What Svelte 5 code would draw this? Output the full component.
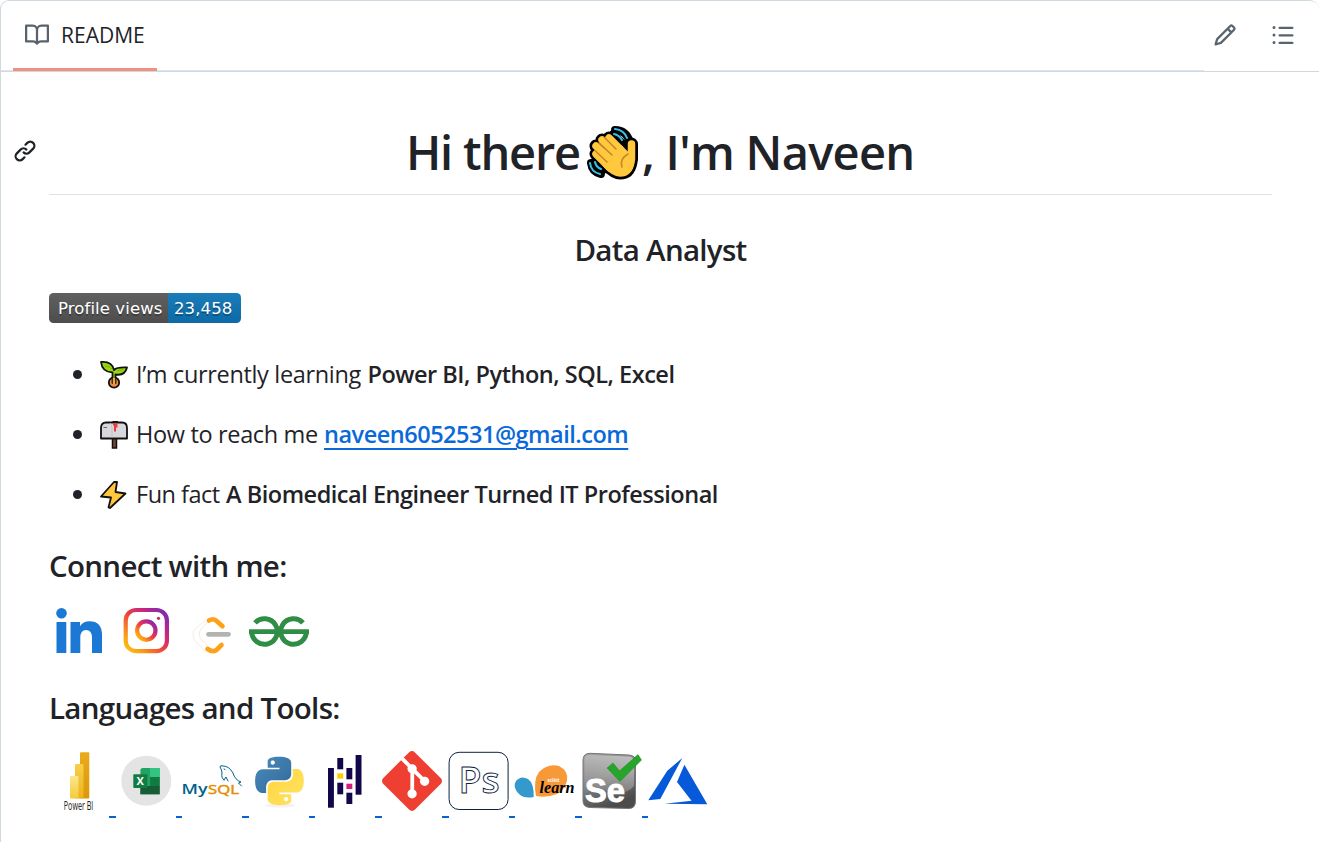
<script>
  const ink = '#13064b';
  const pandas = [
    [13, 17, 39.7, ink], [22.3, 7, 11.3, ink], [22.3, 22.3, 5.4, '#fc0'], [22.3, 31.7, 11.6, ink],
    [31.4, 17, 11.3, ink], [31.4, 32.7, 5.3, '#d81b7e'], [31.4, 41.7, 11.3, ink], [40.6, 4, 39.7, ink]
  ];
</script>

<div class="box">
  <header>
    <nav>
      <span class="tab">
        <svg class="oct" viewBox="0 0 16 16"><path d="M0 1.75A.75.75 0 0 1 .75 1h4.253c1.227 0 2.317.59 3 1.501A3.743 3.743 0 0 1 11.006 1h4.245a.75.75 0 0 1 .75.75v10.5a.75.75 0 0 1-.75.75h-4.507a2.25 2.25 0 0 0-1.591.659l-.622.621a.75.75 0 0 1-1.06 0l-.622-.621A2.25 2.25 0 0 0 5.258 13H.75a.75.75 0 0 1-.75-.75Zm7.251 10.324.004-5.073-.002-2.253A2.25 2.25 0 0 0 5.003 2.5H1.5v9h3.757a3.75 3.75 0 0 1 1.994.574ZM8.755 4.75l-.004 7.322a3.752 3.752 0 0 1 1.992-.572H14.5v-9h-3.495a2.25 2.25 0 0 0-2.25 2.25Z"/></svg>
        <span class="label">README</span>
      </span>
    </nav>
    <div class="actions">
      <svg class="oct" viewBox="0 0 16 16"><path d="M11.013 1.427a1.75 1.75 0 0 1 2.474 0l1.086 1.086a1.75 1.75 0 0 1 0 2.474l-8.61 8.61c-.21.21-.47.364-.756.445l-3.251.93a.75.75 0 0 1-.927-.928l.929-3.25c.081-.286.235-.547.445-.758l8.61-8.61Zm.176 4.823L9.75 4.81l-6.286 6.287a.253.253 0 0 0-.064.108l-.558 1.953 1.953-.558a.253.253 0 0 0 .108-.064Zm1.238-3.763a.25.25 0 0 0-.354 0L10.811 3.75l1.439 1.44 1.263-1.263a.25.25 0 0 0 0-.354Z"/></svg>
      <svg class="oct" viewBox="0 0 16 16"><path d="M5.75 2.5h8.5a.75.75 0 0 1 0 1.5h-8.5a.75.75 0 0 1 0-1.5Zm0 5h8.5a.75.75 0 0 1 0 1.5h-8.5a.75.75 0 0 1 0-1.5Zm0 5h8.5a.75.75 0 0 1 0 1.5h-8.5a.75.75 0 0 1 0-1.5ZM2 14a1 1 0 1 1 0-2 1 1 0 0 1 0 2Zm1-6a1 1 0 1 1-2 0 1 1 0 0 1 2 0ZM2 4a1 1 0 1 1 0-2 1 1 0 0 1 0 2Z"/></svg>
    </div>
  </header>

  <main>
    <div class="title">
      <svg class="anchor" viewBox="0 0 16 16"><path d="m7.775 3.275 1.25-1.25a3.5 3.5 0 1 1 4.95 4.95l-2.5 2.5a3.5 3.5 0 0 1-4.95 0 .751.751 0 0 1 .018-1.042.751.751 0 0 1 1.042-.018 1.998 1.998 0 0 0 2.83 0l2.5-2.5a2.002 2.002 0 0 0-2.83-2.83l-1.25 1.25a.751.751 0 0 1-1.042-.018.751.751 0 0 1-.018-1.042Zm-4.69 9.64a1.998 1.998 0 0 0 2.83 0l1.25-1.25a.751.751 0 0 1 1.042.018.751.751 0 0 1 .018 1.042l-1.25 1.25a3.5 3.5 0 1 1-4.95-4.95l2.5-2.5a3.5 3.5 0 0 1 4.95 0 .751.751 0 0 1-.018 1.042.751.751 0 0 1-1.042.018 1.998 1.998 0 0 0-2.83 0l-2.5 2.5a1.998 1.998 0 0 0 0 2.83Z"/></svg>
      <h1>
        <span>Hi there</span>
        <svg class="wave" viewBox="0 0 54 56">
          <g fill="none" stroke-linecap="round">
            <g stroke="#000" stroke-width="8">
              <path d="M29 5Q40 5 44 17M27 9L38 20M5 38Q6 47 15 49M10 36L17 45"/>
            </g>
            <g stroke="#000" stroke-width="13" stroke-linejoin="round">
              <path d="M23 13L34 24M16 15L30 29M10 21L25 35M10 29L24 43M45.5 19V34"/>
              <path fill="#000" d="M22 25L34 24L41 31L45 29V37Q43 48 34 48Q28 48 20 39Z"/>
            </g>
            <g stroke="#ffc83d" stroke-width="7.5" stroke-linejoin="round">
              <path d="M23 13L34 24M16 15L30 29M10 21L25 35M10 29L24 43M45.5 19V34"/>
              <path fill="#ffc83d" d="M22 25L34 24L41 31L45 29V37Q43 48 34 48Q28 48 20 39Z"/>
            </g>
            <path stroke="#c4862b" stroke-width="1.6" d="M18.5 12.5L30 24M13 18L26 30M9.5 26L21 37M42 29Q33 34 36 42"/>
            <path stroke="#35c1e8" stroke-width="2.1" d="M29 4Q38 5 41 13M28 9Q33 10 36 15M4 38Q5 47 14 49M9 37Q10 42 15 44"/>
          </g>
        </svg>
        <span class="rest">, I'm Naveen</span>
      </h1>
    </div>

    <h3 class="role">Data Analyst</h3>

    <div class="badge"><span class="views">Profile views</span><span class="count">23,458</span></div>

    <ul>
      <li>
        <svg viewBox="0 0 28 28">
          <g stroke="#111" stroke-width="1.8" stroke-linejoin="round">
            <circle cx="14" cy="21.5" r="5.2" fill="#ef8a4c"/>
            <path fill="#9bd512" d="M1 1Q12 0 14 9Q17 6 27 6.500Q25 15 15.500 13.500V22H12.500V11.500Q2 11 1 1Z"/>
            <path fill="none" stroke="#5fa30c" stroke-width=".7" d="M5 5Q9 5 12 8M17 10Q19 9 23 9"/>
            <path stroke="#f6a623" stroke-width="2.400" d="M14 17V23"/>
          </g>
        </svg>
        <span class="t1">I’m currently learning</span><b class="b1">Power BI, Python, SQL, Excel</b>
      </li>
      <li>
        <svg viewBox="0 0 28 28">
          <rect x="12.500" y="15" width="4" height="12" fill="#764635" stroke="#111" stroke-width="1.500"/>
          <path fill="#d8d8dc" stroke="#111" stroke-width="1.800" stroke-linejoin="round" d="M1 17.500V7Q1 1.500 6 1.500H22Q27 1.500 27 7V17.500Z"/>
          <path d="M10 2Q12 4 12 7V16.500" fill="none" stroke="#c0c0c6"/>
          <path d="M3.500 6.500H7" stroke="#666"/>
          <path d="M12.500 1H18" stroke="#111" stroke-width="2"/>
          <path fill="#f03a3a" d="M13 2.500H17.500V6.500H16V10.500H14V4.500H13Z"/>
        </svg>
        <span class="t2">How to reach me</span><a class="b2" href="mailto:naveen6052531@gmail.com">naveen6052531@gmail.com</a>
      </li>
      <li>
        <svg viewBox="0 0 28 28">
          <path fill="#ffc83d" stroke="#111" stroke-width="1.800" stroke-linejoin="round" d="M14 1L1 15.500L11 16.500L8.500 26.500L10 27L25.500 12.500L15.500 11L17 1Z"/>
        </svg>
        <span class="t3">Fun fact</span><b class="b3">A Biomedical Engineer Turned IT Professional</b>
      </li>
    </ul>

    <h3 class="connect">Connect with me:</h3>
    <div class="icons social">
      <svg viewBox="0 0 60 46">
        <g fill="#1b78d4"><circle cx="12.500" cy="5.300" r="5.300"/><path d="M7.500 14H17.300V45H7.500ZM21.500 14H31v4.200Q34 13.200 40.500 13.200Q53 13.200 53 27V45H43V30Q43 22 37 22Q31.300 22 31.300 30V45H21.500Z"/></g>
      </svg>
      <svg viewBox="0 0 60 46">
        <defs>
          <linearGradient id="ig" x1="0" y1="1" x2="1" y2="0"><stop stop-color="#fdc70c"/><stop offset=".2" stop-color="#fb9a18"/><stop offset=".48" stop-color="#ed403f"/><stop offset=".7" stop-color="#c9277f"/><stop offset="1" stop-color="#722abb"/></linearGradient>
        </defs>
        <rect x="9.700" y="2" width="41.200" height="41.200" rx="10.500" fill="none" stroke="url(#ig)" stroke-width="4.200"/>
        <circle cx="30.300" cy="22.600" r="9.200" fill="none" stroke="url(#ig)" stroke-width="4.200"/>
        <circle cx="42.500" cy="10.300" r="1.600" fill="#c32a6b"/>
      </svg>
      <svg viewBox="0 0 60 46">
        <g fill="none" stroke-linecap="round">
          <path stroke="#f6e3d8" stroke-width=".8" d="M25 11L13 21Q9 27 13 33L23 43M27 13L19 21Q15 27 20 32L28 40"/>
          <path stroke="#ffa116" stroke-width="4.600" stroke-linejoin="round" d="M27 12.500Q31 10 34 12.500L40.500 18.300M25.500 41Q31.500 45 35 41.500L39.500 37"/>
          <path stroke="#b3b3b3" stroke-width="4.800" d="M26.500 26.300H46.500"/>
        </g>
      </svg>
      <svg viewBox="0 0 60 46">
        <g fill="none" stroke="#2f8d46" stroke-width="5">
          <path d="M6 14.900A12.800 12.800 0 1 1 2.700 23.500M54 14.900A12.800 12.800 0 1 0 57.300 23.500"/>
          <path stroke-width="4.800" d="M0 23.600H60"/>
        </g>
      </svg>
    </div>

    <h3 class="langs">Languages and Tools:</h3>
    <div class="icons tools">
      <svg viewBox="0 0 60 60">
        <defs>
          <linearGradient id="p1" x2="0" y2="1"><stop stop-color="#e9ab1c"/><stop offset="1" stop-color="#dd960a"/></linearGradient>
          <linearGradient id="p2" x2="0" y2="1"><stop stop-color="#f6cf48"/><stop offset="1" stop-color="#eeb21a"/></linearGradient>
          <linearGradient id="p3" x2="0" y2="1"><stop stop-color="#fbe68c"/><stop offset="1" stop-color="#f3cb3e"/></linearGradient>
        </defs>
        <rect x="31" y="1.200" width="9.300" height="46.300" rx="1" fill="url(#p1)"/>
        <rect x="26" y="13" width="8.500" height="34.500" rx="1" fill="url(#p2)"/>
        <rect x="21" y="25" width="8.500" height="22.500" rx="1" fill="url(#p3)"/>
        <text class="sans" x="14.800" y="58.500" font-size="12.500" fill="#222" textLength="29.500" lengthAdjust="spacingAndGlyphs">Power BI</text>
      </svg><i></i>
      <svg viewBox="0 0 60 60">
        <circle cx="30.300" cy="29.700" r="25" fill="#e4e4e4"/>
        <path fill="#21a366" d="M26 17H43.700V43.300H24.400V18.500Z"/>
        <path fill="#33c481" d="M34 17H43.700V26H34Z"/><path fill="#107c41" d="M34 26H43.700V35H34Z"/><path fill="#185c37" d="M24.400 35H43.700V43.300H24.400Z"/>
        <rect x="17.300" y="23.300" width="14" height="13.800" rx="1" fill="#107c41"/>
        <text class="sans" x="20.500" y="34.200" font-size="11" font-weight="700" fill="#fff">X</text>
      </svg><i></i>
      <svg viewBox="0 0 60 60">
        <text class="sans" x="-.5" y="42.500" font-size="13.500" font-weight="600" fill="#00618a" textLength="26" lengthAdjust="spacingAndGlyphs">My</text>
        <text class="sans" x="26" y="42.500" font-size="13.500" fill="#e48e00" stroke="#e48e00" stroke-width=".5" textLength="31" lengthAdjust="spacingAndGlyphs">SQL</text>
        <path fill="none" stroke="#00618a" stroke-width="1" stroke-linecap="round" stroke-linejoin="round" d="M42 29Q39 27 40 22Q40 19 38 16Q38 14 41 15Q47 15 51 22Q53 29 59 31L56.500 32L59.500 35M42 29L44 26L46 30M42 18L43 18.500"/>
      </svg><i></i>
      <svg viewBox="0 0 60 60">
        <defs>
          <linearGradient id="py" x2="1" y2="1"><stop stop-color="#4b8bbe"/><stop offset="1" stop-color="#306998"/></linearGradient>
          <linearGradient id="pz" x2="1" y2="1"><stop stop-color="#ffd43b"/><stop offset="1" stop-color="#ffe467"/></linearGradient>
        </defs>
        <ellipse cx="31" cy="54.500" rx="15" ry="2" fill="#f3f3f3"/>
        <g transform="translate(6.200 5.700) scale(2.020)">
          <path fill="url(#py)" d="M14.250.18l.9.2.73.26.59.3.45.32.34.34.25.34.16.33.1.3.04.26.02.2-.01.13V8.500l-.05.63-.13.55-.21.46-.26.38-.3.31-.33.25-.35.19-.35.14-.33.1-.3.07-.26.04-.21.02H8.770l-.69.05-.59.14-.5.22-.41.27-.33.32-.27.35-.2.36-.15.37-.1.35-.07.32-.04.27-.02.21v3.060H3.170l-.21-.03-.28-.07-.32-.12-.35-.18-.36-.26-.36-.36-.35-.46-.32-.59-.28-.73-.21-.88-.14-1.050-.05-1.230.06-1.220.16-1.040.24-.87.32-.71.36-.57.4-.44.42-.33.42-.24.4-.16.36-.1.32-.05.24-.01h.16l.06.01h8.160v-.83H6.180l-.01-2.750-.02-.37.05-.34.11-.31.17-.28.25-.26.31-.23.38-.2.44-.18.51-.15.58-.12.64-.1.71-.06.77-.04.84-.02 1.270.05zm-6.300 1.980l-.23.33-.08.41.08.41.23.34.33.22.41.09.41-.09.33-.22.23-.34.08-.41-.08-.41-.23-.33-.33-.22-.41-.09-.41.09z"/>
          <path fill="url(#pz)" d="M21.040 6.110l.28.06.32.12.35.18.36.27.36.35.35.47.32.59.28.73.21.88.14 1.040.05 1.230-.06 1.230-.16 1.040-.24.86-.32.71-.36.57-.4.45-.42.33-.42.24-.4.16-.36.09-.32.05-.24.02-.16-.01h-8.220v.82h5.840l.01 2.760.02.36-.05.34-.11.31-.17.29-.25.25-.31.24-.38.2-.44.17-.51.15-.58.13-.64.09-.71.07-.77.04-.84.01-1.270-.04-1.070-.14-.9-.2-.73-.25-.59-.3-.45-.33-.34-.34-.25-.34-.16-.33-.1-.3-.04-.25-.02-.2.01-.13v-5.340l.05-.64.13-.54.21-.46.26-.38.3-.32.33-.24.35-.2.35-.14.33-.1.3-.06.26-.04.21-.02.13-.01h5.840l.69-.05.59-.14.5-.21.41-.28.33-.32.27-.35.2-.36.15-.36.1-.35.07-.32.04-.28.02-.21V6.070h2.090l.14.01zm-6.470 14.140l-.23.33-.08.41.08.41.23.33.33.23.41.08.41-.08.33-.23.23-.33.08-.41-.08-.41-.23-.33-.33-.23-.41-.08-.41.08z"/>
        </g>
      </svg><i></i>
      <svg viewBox="0 0 60 60">
        {#each pandas as [x, y, height, fill]}
          <rect {x} {y} width="5.900" {height} {fill}/>
        {/each}
      </svg><i></i>
      <svg viewBox="0 0 24 24"><path fill="#ee3f32" d="M23.546 10.930L13.067.452c-.604-.603-1.582-.603-2.188 0L8.708 2.627l2.760 2.760c.645-.215 1.379-.07 1.889.441.516.515.658 1.258.438 1.900l2.658 2.660c.645-.223 1.387-.078 1.900.435.721.72.721 1.884 0 2.604-.719.719-1.881.719-2.600 0-.539-.541-.674-1.337-.404-1.996L12.860 8.955v6.525c.176.086.342.203.488.348.713.721.713 1.883 0 2.600-.719.721-1.889.721-2.609 0-.719-.719-.719-1.879 0-2.598.182-.18.387-.316.605-.406V8.835c-.217-.091-.424-.222-.6-.401-.545-.545-.676-1.342-.396-2.009L7.636 3.700.45 10.881c-.6.605-.6 1.584 0 2.189l10.480 10.477c.604.604 1.582.604 2.186 0l10.430-10.430c.605-.603.605-1.582 0-2.187"/></svg><i></i>
      <svg viewBox="0 0 60 60">
        <rect x=".1" y="1.300" width="59" height="57.200" rx="10" fill="#fff" stroke="#0c2340"/>
        <text class="ps" x="9.500" y="42.300" font-size="36" font-weight="600" fill="#fff" stroke="#0c2340" stroke-width=".9" textLength="41" lengthAdjust="spacingAndGlyphs">Ps</text>
      </svg><i></i>
      <svg viewBox="0 0 60 60">
        <path fill="#3499cd" d="M13 28Q19 32 18.700 46Q9 48 4 43Q-3 36 1 30Q6 24 13 28Z"/>
        <path fill="#f89939" d="M21 45Q18 29 24 21Q33 12 44 15Q54 20 52 30Q49 40 42 43Q32 47 21 45Z"/>
        <text class="sans" x="32.500" y="30.500" font-size="4.500" font-weight="700" fill="#fff" textLength="12" lengthAdjust="spacingAndGlyphs">scikit</text>
        <text class="script" x="24.500" y="41.500" font-size="16" font-weight="700" textLength="35" lengthAdjust="spacingAndGlyphs">learn</text>
      </svg><i></i>
      <svg viewBox="0 0 60 60">
        <defs><linearGradient id="se" x2=".4" y2="1"><stop stop-color="#a5a5a5"/><stop offset=".5" stop-color="#858585"/><stop offset="1" stop-color="#4c4c4c"/></linearGradient>
        <linearGradient id="sg" x1="0" y1="1" x2="1" y2="0"><stop stop-color="#fff" stop-opacity="0"/><stop offset="1" stop-color="#fff" stop-opacity=".45"/></linearGradient></defs>
        <path fill="url(#se)" stroke="#777" stroke-width="1" d="M8 2.300L47 4Q53.500 4.500 53.500 10V50Q53.500 57.500 47 57.500L8 56.500Q1 56 1 50V9Q1 2.500 8 2.300Z"/>
        <path fill="url(#sg)" d="M8 4L47 5.500Q52 6 52 11V35Q44 45 25 40Q6 33 2.500 48V9Q2.500 4 8 4Z"/>
        <text class="arial" x="3" y="50.500" font-size="34" font-weight="700" fill="#fff" stroke="#fff" stroke-width="1" textLength="40" lengthAdjust="spacingAndGlyphs">Se</text>
        <path fill="#27a52a" stroke="#178a1c" stroke-width=".5" d="M25 17L31 12L37.500 20L56 3.500L59.500 9L38 30.500Z"/>
      </svg><i></i>
      <svg viewBox="0 0 60 60"><path fill="#0659d8" d="M34.300 7L19.300 19.700L.3 49.300L12.300 47.900ZM36.400 13.700L29 31L43.500 49.800L16.600 52.700L59.300 53.200Z"/></svg>
    </div>
  </main>
</div>

<style>
  :global(body) { margin: 0; background: #fff; overflow: hidden; }
  * { box-sizing: border-box; }
  .box { height: 842px; border: 1px solid #d1d9e0; border-width: 1px 0 0 1px; border-radius: 9px 9px 0 0; font-family: "Open Sans", "Noto Sans", sans-serif; color: #1f2328; overflow: hidden; }
  svg { display: block; flex: none; overflow: visible; }
  header { height: 71px; display: flex; justify-content: space-between; border-bottom: 1px solid #d1d9e0; }
  nav { width: 1203px; height: 70px; padding-left: 12px; border-bottom: 1px solid #dce4ec; }
  .tab { width: 144px; height: 70px; display: flex; align-items: center; gap: 12px; padding-left: 12px; border-bottom: 3px solid #f0907e; font-size: 21px; font-weight: 500; }
  .oct { width: 24px; height: 24px; fill: #59636e; }
  .label { white-space: nowrap; padding-top: 1px; }
  .actions { display: flex; align-items: center; gap: 34px; padding: 0 24px 2px 0; }
  main { padding-left: 48px; }
  h1, h3, ul { margin: 0; padding: 0; white-space: nowrap; }
  .title { width: 1223px; height: 123px; border-bottom: 1px solid #dfe3e7; padding-top: 48px; display: flex; align-items: flex-start; }
  .anchor { width: 24px; height: 24px; margin: 19px 12px 0 -36px; fill: #1f2328; }
  h1 { flex: 1; height: 64px; line-height: 64px; font-size: 47px; font-weight: 600; display: flex; padding-left: 357px; letter-spacing: -1.200px; }
  .wave { width: 54px; height: 56px; margin: 5px 0 0 6px; }
  .rest { letter-spacing: -.7px; margin-left: 2px; }
  h3 { font-size: 29.500px; font-weight: 600; line-height: 38px; height: 38px; letter-spacing: -.7px; }
  .role { width: 1223px; text-align: center; margin-top: 36px; }
  .badge { width: 192px; height: 30px; margin-top: 24px; display: flex; border-radius: 4.5px; overflow: hidden; color: #fff; font: 16.500px/31px "DejaVu Sans", sans-serif; text-shadow: 0 1.500px 0 rgba(1, 1, 1, .3); white-space: nowrap; }
  .views { width: 119px; padding-left: 9px; background: linear-gradient(#606060, #4d4d4d); letter-spacing: .1px; }
  .count { flex: 1; padding-left: 6px; background: linear-gradient(#1a7cb8, #0c6aa6); letter-spacing: .1px; }
  ul { margin-top: 33px; list-style: none; display: flex; flex-direction: column; gap: 24px; font-size: 23.500px; }
  li { height: 36px; line-height: 36px; display: flex; align-items: center; padding-left: 24px; }
  li::before { content: ""; width: 9px; height: 9px; border-radius: 50%; background: #1f2328; margin-right: 17.500px; }
  li svg { width: 28px; height: 28px; margin: 2px 8.500px 0 0; }
  li span { flex: none; width: 231.500px; letter-spacing: -.34px; }
  li .t2 { width: 188px; }
  li .t3 { width: 90px; letter-spacing: -.5px; }
  b, a { font-weight: 600; letter-spacing: -.48px; }
  a { color: #0969da; text-decoration: underline; text-decoration-thickness: 2px; text-underline-offset: 5px; }
  .connect { margin-top: 35px; }
  .langs { margin-top: 35px; }
  .icons { display: flex; }
  .social { gap: 6.600px; margin-top: 23px; }
  .social svg { width: 60px; height: 46px; }
  .tools { margin-top: 24px; height: 67px; }
  .tools svg { width: 60px; height: 60px; }
  .tools i { width: 6.600px; height: 67px; border-bottom: 2px solid #0b62cf; }
  .sans { font-family: "Open Sans", sans-serif; }
  .ps { font-family: "Open Sans", sans-serif; }
  .arial { font-family: "Liberation Sans", sans-serif; }
  .script { font-family: "Liberation Serif", serif; font-style: italic; }
</style>
